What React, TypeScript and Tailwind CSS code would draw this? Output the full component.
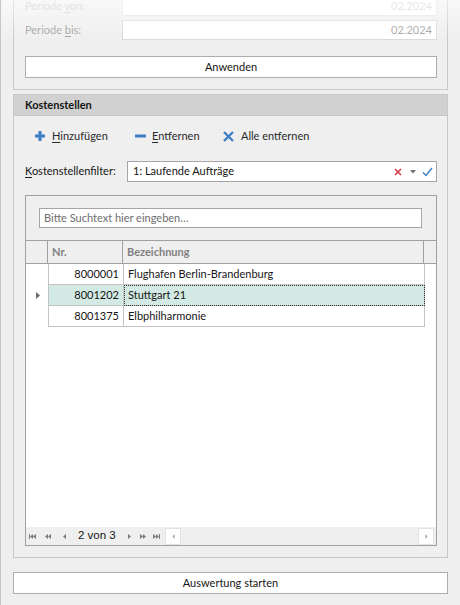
import React from "react";

const F = { fontFamily: 'Lato, "Noto Sans", sans-serif' } as const;

function U({ children }: { children: React.ReactNode }) {
  return <span className="underline underline-offset-2 decoration-1">{children}</span>;
}

function Tri({ dir, className }: { dir: "l" | "r"; className?: string }) {
  return (
    <svg width="3" height="5" viewBox="0 0 3 5" className={className}>
      {dir === "l" ? <path d="M3 0 L0 2.5 L3 5 Z" fill="#7a7a7a" /> : <path d="M0 0 L3 2.5 L0 5 Z" fill="#7a7a7a" />}
    </svg>
  );
}

function Bar() {
  return <span className="inline-block w-[1px] h-[5px] bg-[#7a7a7a]" />;
}

export default function App() {
  const rows = [
    { nr: "8000001", name: "Flughafen Berlin-Brandenburg", sel: false },
    { nr: "8001202", name: "Stuttgart 21", sel: true },
    { nr: "8001375", name: "Elbphilharmonie", sel: false },
  ];
  return (
    <div
      className="relative w-[460px] h-[605px] overflow-hidden bg-[#efefef] border-l border-[#c6c6c6] pl-[12px] pr-[12px] text-[11px] text-[#151515]"
      style={F}
    >
      {/* top panel */}
      <div className="-mt-[5px] border border-[#c8c8c8] bg-[#efefef] pl-[11px] pr-[10px] pb-[11px]">
        <div className="flex items-center h-[20px]">
          <div className="w-[97px] text-[#c4c4c4]">
            Periode <U>v</U>on:
          </div>
          <div className="flex-1 h-[20px] border border-[#e2e2e2] bg-white flex items-center justify-end pr-[4px] text-[#cccccc]">
            02.2024
          </div>
        </div>
        <div className="flex items-center h-[20px] mt-[4px]">
          <div className="w-[97px] text-[#a0a0a0]">
            Periode <U>b</U>is:
          </div>
          <div className="flex-1 h-[20px] border border-[#dadada] bg-white flex items-center justify-end pr-[4px] text-[#a0a0a0]">
            02.2024
          </div>
        </div>
        <button className="mt-[16px] w-full h-[22px] border border-[#adadad] bg-white flex items-center justify-center text-[#151515]">
          Anwenden
        </button>
      </div>

      {/* Kostenstellen */}
      <div className="mt-[4px] border border-[#c8c8c8]">
        <div className="h-[20px] bg-[#d1d1d1] border-b border-[#c8c8c8] box-content flex items-center pl-[11px] font-bold text-[#151515]">
          Kostenstellen
        </div>
        <div className="pl-[11px] pr-[10px] pt-[9px] pb-[11px] bg-[#efefef]">
          <div className="h-[22px] flex items-center text-[#2a2a2a]">
            <div className="flex items-center ml-[10px] w-[100px]">
              <svg width="10" height="10" viewBox="0 0 10 10">
                <path d="M3.5 0 H6.5 V3.5 H10 V6.5 H6.5 V10 H3.5 V6.5 H0 V3.5 H3.5 Z" fill="#3d7ec4" />
              </svg>
              <span className="ml-[7px]">
                <U>H</U>inzufügen
              </span>
            </div>
            <div className="flex items-center w-[88px]">
              <svg width="11" height="10" viewBox="0 0 11 10">
                <rect x="0" y="3.5" width="11" height="3" fill="#3d7ec4" />
              </svg>
              <span className="ml-[6px]">
                <U>E</U>ntfernen
              </span>
            </div>
            <div className="flex items-center">
              <svg width="11" height="11" viewBox="0 0 11 11">
                <path d="M1 1 L10 10 M10 1 L1 10" stroke="#3d7ec4" strokeWidth="2.4" />
              </svg>
              <span className="ml-[7px]">
                Alle ent<U>f</U>ernen
              </span>
            </div>
          </div>

          <div className="mt-[14px] flex items-center h-[21px]">
            <div className="w-[102px] whitespace-nowrap">
              <U>K</U>ostenstellenfilter:
            </div>
            <div className="flex-1 h-[21px] border border-[#a6a6a6] bg-white flex items-center pl-[5px] pr-[3px]">
              <span className="flex-1">1: Laufende Aufträge</span>
              <svg width="8" height="8" viewBox="0 0 8 8" className="mr-[8px]">
                <path d="M1 1 L7 7 M7 1 L1 7" stroke="#d23a4a" strokeWidth="1.6" />
              </svg>
              <svg width="6" height="4" viewBox="0 0 6 4" className="mr-[6px]">
                <path d="M0 0 H6 L3 3.5 Z" fill="#707070" />
              </svg>
              <svg width="11" height="10" viewBox="0 0 11 10">
                <path d="M1 5.5 L4 8.5 L10 1" stroke="#3d7ec4" strokeWidth="1.4" fill="none" />
              </svg>
            </div>
          </div>

          {/* grid */}
          <div className="mt-[13px] h-[351px] border border-[#a0a0a0] flex flex-col">
            <div className="bg-[#efefef] pt-[12px] pb-[12px] pl-[13px] pr-[14px]">
              <div className="h-[20px] border border-[#a6a6a6] bg-white flex items-center pl-[4px] text-[#6e6e6e]">
                Bitte Suchtext hier eingeben…
              </div>
            </div>
            <div className="h-[24px] flex bg-[#efefef] border-t border-b border-[#a0a0a0] font-bold text-[#808080]">
              <div className="w-[22px] border-r border-[#a0a0a0]" />
              <div className="w-[75px] border-r border-[#a0a0a0] flex items-center pl-[4px]">Nr.</div>
              <div className="w-[301px] border-r border-[#a0a0a0] flex items-center pl-[4px]">Bezeichnung</div>
              <div className="flex-1" />
            </div>
            <div className="flex-1 bg-white flex flex-col">
              {rows.map((r) => (
                <div key={r.nr} className="h-[21px] flex">
                  <div className="w-[22px] flex items-center justify-center pl-[2px]">
                    {r.sel && (
                      <svg width="4" height="7" viewBox="0 0 4 7">
                        <path d="M0 0 L4 3.5 L0 7 Z" fill="#6a6a6a" />
                      </svg>
                    )}
                  </div>
                  <div
                    className={`w-[76px] border-l border-r border-b border-[#c4c4c4] flex items-center justify-end pr-[4px] ${
                      r.sel ? "bg-[#d3e9e3]" : "bg-white"
                    }`}
                  >
                    {r.nr}
                  </div>
                  <div
                    className={`w-[301px] border-r border-b border-[#c4c4c4] flex items-center pl-[4px] ${
                      r.sel ? "bg-[#d3e9e3] outline-1 outline-dotted outline-[#303030] -outline-offset-1" : "bg-white"
                    }`}
                  >
                    {r.name}
                  </div>
                </div>
              ))}
            </div>
            <div className="h-[18px] bg-[#efefef] flex items-center pl-[3px] pr-[2px]">
              <div className="flex items-center w-[16px]">
                <Bar />
                <Tri dir="l" />
                <Tri dir="l" />
              </div>
              <div className="flex items-center w-[18px]">
                <Tri dir="l" />
                <Tri dir="l" />
              </div>
              <div className="flex items-center w-[15px]">
                <Tri dir="l" />
              </div>
              <span
                className="w-[50px] text-[11.5px] text-[#151515]"
                style={{ fontFamily: '"Liberation Sans", Arial, sans-serif' }}
              >
                2 von 3
              </span>
              <div className="flex items-center w-[12px]">
                <Tri dir="r" />
              </div>
              <div className="flex items-center w-[13px]">
                <Tri dir="r" />
                <Tri dir="r" />
              </div>
              <div className="flex items-center w-[12px]">
                <Tri dir="r" />
                <Tri dir="r" />
                <Bar />
              </div>
              <div className="flex-1 flex items-center justify-between">
                <div className="w-[16px] h-[17px] bg-white border border-[#e3e3e3] flex items-center justify-center">
                  <Tri dir="l" className="opacity-50" />
                </div>
                <div className="w-[16px] h-[17px] bg-white border border-[#e3e3e3] flex items-center justify-center">
                  <Tri dir="r" className="opacity-50" />
                </div>
              </div>
            </div>
          </div>
        </div>
      </div>

      <button className="mt-[14px] w-full h-[22px] border border-[#adadad] bg-white flex items-center justify-center text-[#151515]">
        Auswertung starten
      </button>

      <div className="pointer-events-none absolute left-0 right-0 top-0 h-[40px] bg-gradient-to-b from-white/60 to-transparent" />
    </div>
  );
}
